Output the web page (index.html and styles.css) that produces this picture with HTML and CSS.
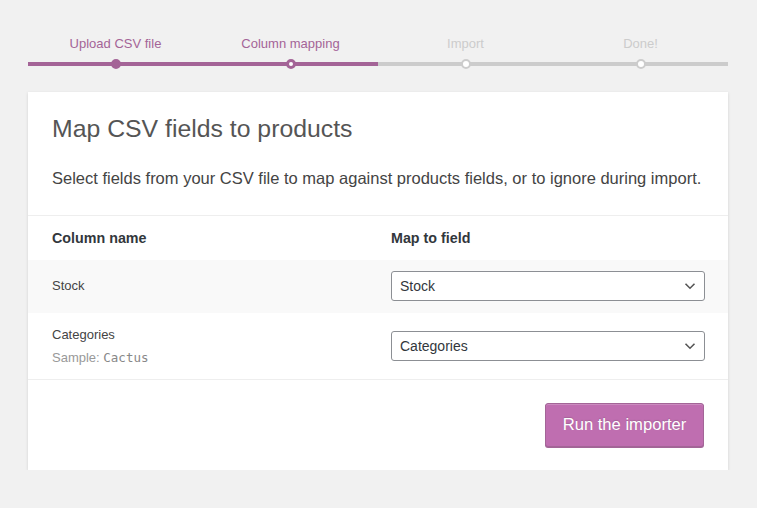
FILE: index.html
```html
<!DOCTYPE html>
<html>
<head>
<meta charset="utf-8">
<link rel="stylesheet" href="styles.css">
</head>
<body>
<ol class="steps">
  <li class="step done">Upload CSV file</li>
  <li class="step active">Column mapping</li>
  <li class="step">Import</li>
  <li class="step">Done!</li>
</ol>
<div class="card">
  <header class="card-head">
    <h2 class="title">Map CSV fields to products</h2>
    <p class="desc">Select fields from your CSV file to map against products fields, or to ignore during import.</p>
  </header>
  <div class="table">
    <div class="row head">
      <div class="cell first">Column name</div>
      <div class="cell second">Map to field</div>
    </div>
    <div class="row alt">
      <div class="cell first">Stock</div>
      <div class="cell second">
        <div class="select"><span>Stock</span><svg class="chev" width="12" height="8" viewBox="0 0 12 8"><path d="M1.5 1.8 6 6.2 10.5 1.8" fill="none" stroke="#555" stroke-width="1.6"/></svg></div>
      </div>
    </div>
    <div class="row tall">
      <div class="cell first">
        <div>Categories</div>
        <div class="sample">Sample: <code>Cactus</code></div>
      </div>
      <div class="cell second">
        <div class="select"><span>Categories</span><svg class="chev" width="12" height="8" viewBox="0 0 12 8"><path d="M1.5 1.8 6 6.2 10.5 1.8" fill="none" stroke="#555" stroke-width="1.6"/></svg></div>
      </div>
    </div>
  </div>
  <div class="actions">
    <button class="btn">Run the importer</button>
  </div>
</div>
</body>
</html>
```
FILE: styles.css
```css
html, body {
  margin: 0;
  padding: 0;
  background: #f1f1f1;
  font-family: "Liberation Sans", Arial, sans-serif;
  color: #444;
}
.steps {
  display: flex;
  list-style: none;
  margin: 0 29px 0 28px;
  padding: 36px 0 0;
}
.step {
  flex: 1;
  position: relative;
  text-align: center;
  font-size: 13px;
  line-height: 16px;
  color: #ccc;
  padding-bottom: 10px;
  border-bottom: 4px solid #ccc;
}
.step.done, .step.active {
  color: #a46497;
  border-bottom-color: #a46497;
}
.step::before {
  content: "";
  position: absolute;
  left: 50%;
  bottom: -7px;
  width: 6px;
  height: 6px;
  margin-left: -5px;
  border-radius: 50%;
  background: #fff;
  border: 2px solid #ccc;
}
.step.active::before {
  border: 3px solid #a46497;
  width: 4px;
  height: 4px;
  margin-left: -5px;
}
.step.done::before {
  background: #a46497;
  border-color: #a46497;
}
.card {
  margin: 26px 29px 0 28px;
  background: #fff;
  box-shadow: 0 1px 3px rgba(0,0,0,0.13);
}
.card-head {
  padding: 24px 24px 0;
  border-bottom: 1px solid #eee;
}
.title {
  margin: 0;
  font-size: 24.8px;
  line-height: 26px;
  font-weight: normal;
  color: #555;
}
.desc {
  margin: 24px 0 0;
  padding-bottom: 25px;
  font-size: 16.5px;
  line-height: 24px;
  color: #444;
}
.table {
  border-bottom: 1px solid #eee;
}
.row {
  display: grid;
  grid-template-columns: 1fr 1fr;
  align-items: start;
}
.row.head {
  height: 44px;
  align-items: center;
  font-weight: bold;
  font-size: 14px;
  color: #32373c;
}
.row.alt {
  background: #f9f9f9;
  height: 53px;
  align-items: center;
}
.row.tall {
  height: 66px;
  padding-top: 0;
}
.cell {
  font-size: 13px;
  color: #444;
}
.row.head .cell {
  font-size: 14.3px;
  color: #32373c;
}
.cell.first {
  padding-left: 24px;
}
.cell.second {
  padding: 0 23px 0 13px;
}
.row.alt .cell.first {
  margin-top: -3px;
}
.row.alt .cell.second {
  margin-top: -2px;
}
.row.tall .cell.first {
  padding-top: 14px;
  line-height: 16px;
}
.row.tall .cell.second {
  padding-top: 18px;
}
.sample {
  margin-top: 7px;
  color: #999;
}
.sample code {
  font-family: "DejaVu Sans Mono", monospace;
  font-size: 12.5px;
  color: #888;
}
.select {
  display: flex;
  align-items: center;
  justify-content: space-between;
  box-sizing: border-box;
  height: 30px;
  border: 1px solid #8c8f94;
  border-radius: 3px;
  background: #fff;
  padding: 0 8px 0 8px;
  font-size: 14px;
  color: #32373c;
}
.actions {
  display: flex;
  justify-content: flex-end;
  padding: 23px 24px 23px;
}
.btn {
  font-family: "Liberation Sans", Arial, sans-serif;
  font-size: 16.6px;
  color: #fff;
  background: #bf6eb0;
  border: 1px solid #a36597;
  border-radius: 3px;
  height: 44px;
  width: 159px;
  padding: 0;
  box-shadow: inset 0 1px 0 rgba(255,255,255,0.2), 0 1px 0 #a36597;
  text-shadow: 0 -1px 1px #a36597;
}
```
